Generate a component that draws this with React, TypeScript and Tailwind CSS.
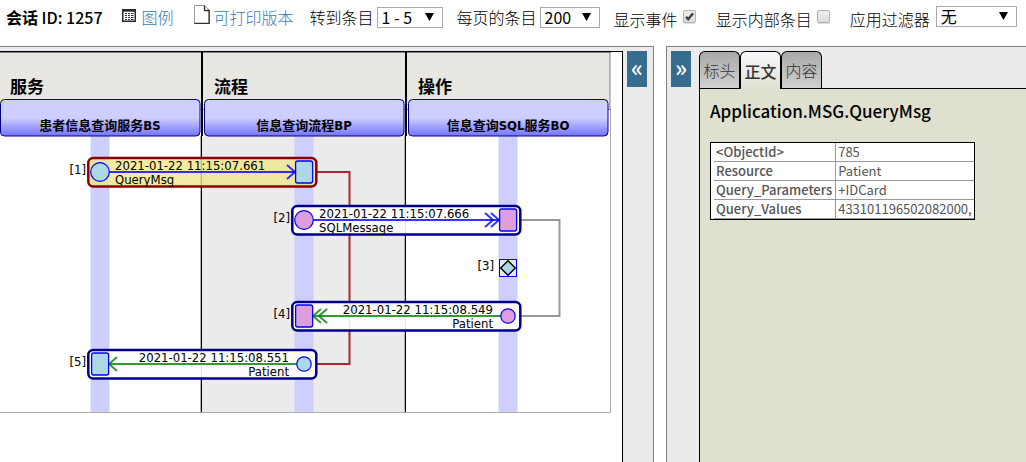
import { useState } from "react";
import type { ReactNode } from "react";

const LANES = [
  { title: "服务", host: "患者信息查询服务BS", x: 0 },
  { title: "流程", host: "信息查询流程BP", x: 204 },
  { title: "操作", host: "信息查询SQL服务BO", x: 408 },
];

type Message = {
  id: number;
  left: number;
  y: number;
  time: string;
  name: string;
  fill: string;
  reply?: boolean;
  double?: boolean;
  selected?: boolean;
};

const MESSAGES: Message[] = [
  { id: 1, left: 100, y: 120, time: "2021-01-22 11:15:07.661", name: "QueryMsg", fill: "#add8e6", selected: true },
  { id: 2, left: 304, y: 168, time: "2021-01-22 11:15:07.666", name: "SQLMessage", fill: "#dda0dd", double: true },
  { id: 4, left: 304, y: 264, time: "2021-01-22 11:15:08.549", name: "Patient", fill: "#dda0dd", reply: true, double: true },
  { id: 5, left: 100, y: 312, time: "2021-01-22 11:15:08.551", name: "Patient", fill: "#add8e6", reply: true },
];

const FIELDS = [
  ["<ObjectId>", "785"],
  ["Resource", "Patient"],
  ["Query_Parameters", "+IDCard"],
  ["Query_Values", "433101196502082000,"],
];

function MessageRow({ m }: { m: Message }) {
  const right = m.left + 204;
  const color = m.reply ? "#008000" : "#0000ff";
  const tip = m.reply ? m.left + 9 : right - 9;
  const dir = m.reply ? 1 : -1;
  const square = m.reply ? m.left : right;
  const circle = m.reply ? right : m.left;
  const textX = m.reply ? right - 15 : m.left + 15;
  const anchor = m.reply ? "end" : "start";
  return (
    <g>
      <rect
        x={m.left - 11.7}
        y={m.y - 14}
        width={228}
        height={28.5}
        rx={5}
        fill={m.selected ? "#f0e68c" : "#ffffff"}
        fillOpacity={m.selected ? 0.8 : 0.9}
        stroke={m.selected ? "#8b0000" : "#00008b"}
        strokeWidth={2.5}
      />
      <g stroke={color} strokeOpacity={0.8} strokeWidth={2} fill="none">
        <path d={`M${circle} ${m.y}H${tip}`} />
        <path d={`M${tip + dir * 8} ${m.y - 7}L${tip} ${m.y}L${tip + dir * 8} ${m.y + 7}`} />
        {m.double && (
          <path d={`M${tip + dir * 14} ${m.y - 7}L${tip + dir * 6} ${m.y}L${tip + dir * 14} ${m.y + 7}`} />
        )}
      </g>
      <rect x={square - 8.4} y={m.y - 11} width={17} height={22} rx={2} fill={m.fill} stroke="#0000ff" strokeWidth={1.3} />
      <circle cx={circle} cy={m.y} r={m.reply ? 7.2 : 9.3} fill={m.fill} stroke="#0000ff" strokeWidth={1.2} />
      <text x={textX} y={m.y - 2} textAnchor={anchor}>{m.time}</text>
      <text x={textX} y={m.y + 12} textAnchor={anchor}>{m.name}</text>
      <text x={m.left - 14} y={m.y + 2} textAnchor="end">[{m.id}]</text>
    </g>
  );
}

function TraceDiagram() {
  return (
    <svg
      width="611"
      height="361"
      viewBox="0 0 611 361"
      role="img"
      aria-label="会话 1257"
      className="block text-[13px] font-['DejaVu_Sans_Condensed','DejaVu_Sans','Noto_Sans_CJK_SC',sans-serif]"
    >
      <defs>
        <linearGradient id="host" x1="0" y1="0" x2="0" y2="1">
          <stop offset="0.5" stopColor="#cfcfff" />
          <stop offset="1" stopColor="#7373ff" />
        </linearGradient>
      </defs>
      <rect x="202" y="0" width="204" height="360" fill="#ebebeb" />
      <rect x="0" y="0" width="610" height="58" fill="#e7e6e1" />
      <path d="M0 0.5H611M610 0V58M0 57.5H611" stroke="#808080" fill="none" />
      <path d="M610.5 58V360.5H0" stroke="#aaaaaa" fill="none" />
      <path d="M200.5 84V360M404.5 84V360" stroke="#b0b0b0" />
      <path d="M201.5 84V360M405.5 84V360" stroke="#000" />
      <path d="M202 0V84M406 0V84" stroke="#000" strokeWidth="2" />
      {LANES.map((lane) => (
        <g key={lane.title}>
          <rect x={lane.x + 90.5} y="84" width="19" height="276" fill="#cfcfff" />
          <rect x={lane.x + 0.5} y="47.5" width="199.5" height="36.5" rx="4" fill="url(#host)" stroke="#00008b" />
          <text x={lane.x + 10} y="41" className="text-[17px] font-bold">{lane.title}</text>
          <text x={lane.x + 100} y="78" textAnchor="middle" className="text-[13px] font-bold">{lane.host}</text>
        </g>
      ))}
      <path d="M316 120H349.5V312H316" stroke="#a52a2a" strokeWidth="2" fill="none" />
      <path d="M520 168H559.5V264H520" stroke="#999" strokeWidth="2" fill="none" />
      {MESSAGES.map((m) => (
        <MessageRow key={m.id} m={m} />
      ))}
      <rect x="499.5" y="207.5" width="17" height="17" fill="#e6e6fa" stroke="#0000ff" />
      <path d="M508 208.7L515.3 216L508 223.3L500.7 216Z" fill="#add8e6" stroke="#000" strokeWidth="1.4" />
      <text x="494" y="218" textAnchor="end">[3]</text>
    </svg>
  );
}

function Select({ id, options, className }: { id: string; options: string[]; className: string }) {
  return (
    <span className={`relative inline-flex ${className}`}>
      <select id={id} className="h-[21px] w-full appearance-none border border-[#a9a9a9] bg-white pl-1 font-normal leading-[19px] text-black">
        {options.map((o) => (
          <option key={o}>{o}</option>
        ))}
      </select>
      <svg viewBox="0 0 9 8" className="pointer-events-none absolute right-[9px] top-[6px] h-2 w-[9px]" aria-hidden="true">
        <path d="M0 0H9L4.5 8Z" fill="#000" />
      </svg>
    </span>
  );
}

function Check({ label, initial }: { label: string; initial: boolean }) {
  const [on, setOn] = useState(initial);
  return (
    <label className="flex items-center gap-[5px]">
      <span>{label}</span>
      <span className="relative mb-[5px] inline-flex">
        <input
          type="checkbox"
          checked={on}
          onChange={() => setOn(!on)}
          className="size-[13px] appearance-none rounded-[2px] border border-[#b4b4b4] bg-linear-to-b from-[#eeeeee] to-[#dcdcdc] shadow-[0_1px_1px_rgba(0,0,0,0.15)]"
        />
        {on && (
          <svg viewBox="0 0 13 13" className="pointer-events-none absolute inset-0 size-[13px]" aria-hidden="true">
            <path d="M3 6.8L5.3 9.2L10 3.2" stroke="#404040" strokeWidth="2.4" fill="none" />
          </svg>
        )}
      </span>
    </label>
  );
}

function Collapse({ label, children }: { label: string; children: ReactNode }) {
  return (
    <button aria-label={label} className="mt-1 flex h-9 w-5 shrink-0 items-center justify-center bg-[#366d8f] pb-1 text-[24px] font-medium leading-none text-white">
      {children}
    </button>
  );
}

export default function App() {
  const [tab, setTab] = useState("正文");
  return (
    <div className="flex min-h-screen flex-col bg-white font-['Noto_Sans_CJK_SC',sans-serif] text-[16px] leading-5 text-black">
      <header className="flex h-[46px] items-start whitespace-nowrap pl-[6px] pt-[7px] font-light">
        <h1 className="mr-[19px] leading-[21px]">
          <span className="font-bold">会话</span> <span className="font-medium">ID: 1257</span>
        </h1>
        <a href="#legend" className="mr-5 flex gap-[6px] leading-[21px] text-[#337ab7]">
          <svg viewBox="0 0 14 13" className="mt-[2px] h-[13px] w-[14px]" aria-hidden="true">
            <rect x="0.75" y="0.75" width="12.5" height="11.5" fill="#fff" stroke="#2b2b2b" strokeWidth="1.5" />
            <path d="M1 1.5H13" stroke="#2b2b2b" strokeWidth="2.4" />
            <path d="M3 4.5H5M6 4.5H8M9 4.5H11.5M3 6.5H5M6 6.5H8M9 6.5H11.5M3 8.5H5M6 8.5H8M9 8.5H11.5M3 10.5H5M6 10.5H8M9 10.5H11.5" stroke="#333" strokeWidth="1.2" />
          </svg>
          图例
        </a>
        <a href="#print" className="mr-4 flex gap-1 leading-[21px] text-[#337ab7]">
          <svg viewBox="0 0 16 19" className="-mt-[2px] h-[19px] w-4" aria-hidden="true">
            <path d="M0.5 0.5H10.5L15 5V18.5H0.5Z" fill="#fff" stroke="#999" />
            <path d="M10.5 0.5V5.5H15.5M15.2 5V18.3H0.5" fill="none" stroke="#333" strokeWidth="1.3" />
          </svg>
          可打印版本
        </a>
        <div className="mr-[14px] flex gap-[3px] leading-[21px]">
          <label htmlFor="goto">转到条目</label>
          <Select id="goto" options={["1 - 5"]} className="w-[66px]" />
        </div>
        <div className="mr-[14px] flex gap-[3px] leading-[21px]">
          <label htmlFor="page-size">每页的条目</label>
          <Select id="page-size" options={["200", "100", "50"]} className="w-[60px]" />
        </div>
        <div className="mt-[2px] flex gap-5">
          <Check label="显示事件" initial={true} />
          <Check label="显示内部条目" initial={false} />
          <div className="flex gap-[6px]">
            <label htmlFor="filter">应用过滤器</label>
            <Select id="filter" options={["无"]} className="-mt-[3px] w-[81px]" />
          </div>
        </div>
      </header>

      <main className="flex flex-1 gap-3">
        <section className="flex shrink-0 border-r border-t border-[#808080] bg-[#ebebeb] pr-[6px]">
          <div className="mr-1 mt-1 border-r border-t border-black bg-white pr-[11px]">
            <TraceDiagram />
          </div>
          <Collapse label="折叠左侧">«</Collapse>
        </section>

        <section className="flex min-w-0 flex-1 border-l border-t border-[#808080] bg-[#ebebeb] pl-1">
          <Collapse label="折叠右侧">»</Collapse>
          <div className="ml-2 mt-1 flex min-w-0 flex-1 flex-col">
            <div role="tablist" className="flex">
              {["标头", "正文", "内容"].map((t) => (
                <button
                  key={t}
                  role="tab"
                  aria-selected={t === tab}
                  onClick={() => setTab(t)}
                  className={
                    t === tab
                      ? "relative -mb-px h-[38px] w-[41px] rounded-t-[6px] border border-b-0 border-black bg-linear-to-b from-[#f8f8ff] to-[#dfe0d0] font-medium text-[#333]"
                      : "h-[37px] w-[41px] rounded-t-[6px] border border-b-0 border-black bg-linear-to-b from-[#a9a9a9] to-[#d0d0d0] font-light text-[#333]"
                  }
                >
                  {t}
                </button>
              ))}
            </div>
            <div role="tabpanel" className="flex-1 border-l border-t border-black bg-[#dfe0d0] pl-[10px] pt-3">
              <h2 className="text-[17px] font-medium leading-5">Application.MSG.QueryMsg</h2>
              <div className="mt-[21px] inline-block border border-black bg-white pl-[3px]">
                <table className="border-collapse text-[13px] leading-[18px] text-[#555]">
                  <tbody>
                    {FIELDS.map(([k, v]) => (
                      <tr key={k} className="border-b border-[#999]">
                        <th scope="row" className="border-r border-[#999] pl-[2px] pr-[3px] text-left font-medium">{k}</th>
                        <td className="px-[2px]">{v}</td>
                      </tr>
                    ))}
                  </tbody>
                </table>
              </div>
            </div>
          </div>
        </section>
      </main>
    </div>
  );
}
